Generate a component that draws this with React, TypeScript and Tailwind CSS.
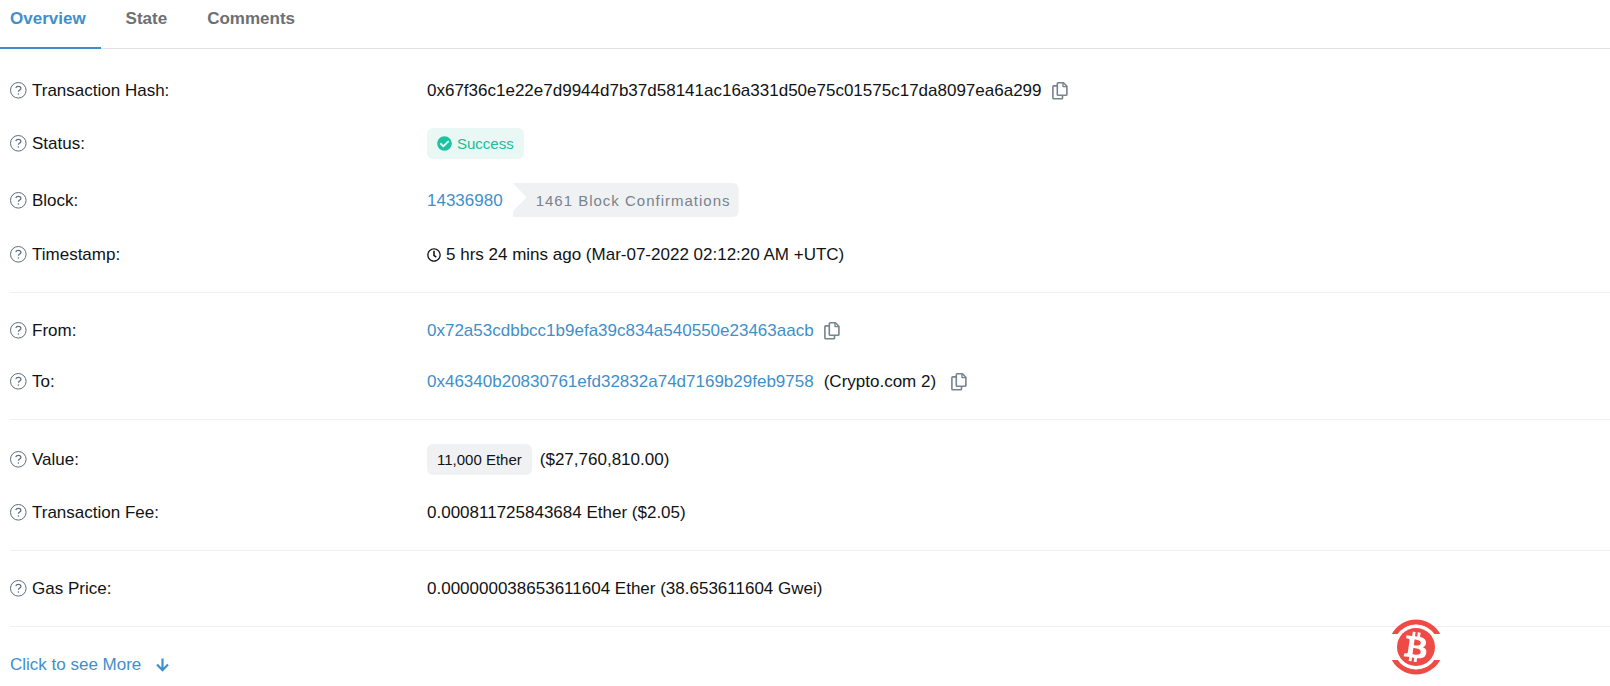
import { useState, type ReactNode } from "react";
import { FaBtc, FaCheckCircle, FaRegClock } from "react-icons/fa";

function HelpIcon() {
  return (
    <svg viewBox="0 0 17 17" className="h-[17px] w-[17px] shrink-0 text-[#5f6b7a]" fill="none" stroke="currentColor" aria-hidden="true">
      <circle cx="8.3" cy="8.3" r="7.8" strokeWidth="1" />
      <path d="M5.8 6.2C6.1 5 7.1 4.4 8.3 4.4c1.4 0 2.6.8 2.6 2 0 1.7-2.5 1.7-2.5 3.4" strokeWidth="1.2" />
      <circle cx="8.4" cy="12" r="0.8" fill="currentColor" stroke="none" />
    </svg>
  );
}

function CopyButton({ label }: { label: string }) {
  return (
    <button type="button" aria-label={label} className="flex shrink-0 cursor-pointer text-[#77838f]">
      <svg viewBox="0 0 16 18" className="h-[18px] w-4" fill="none" stroke="currentColor" strokeWidth="1.6" strokeLinejoin="round" aria-hidden="true">
        <path d="M6.2.8h5.2l3.5 3.4v8.2q0 .9-.9.9H6.2q-.9 0-.9-.9V1.7q0-.9.9-.9z" />
        <path d="M11 .9v3.7h3.8" strokeWidth="1.4" />
        <path d="M5.2 3.9H1.8q-.9 0-.9.9v11.1q0 .9.9.9h7.8q.9 0 .9-.9v-2.5" />
      </svg>
    </button>
  );
}

function Row({ label, children }: { label: string; children: ReactNode }) {
  return (
    <div className="grid grid-cols-[417px_1fr] items-center py-3">
      <dt className="flex items-center gap-[5px]">
        <HelpIcon />
        {label}
      </dt>
      <dd className="flex items-center">{children}</dd>
    </div>
  );
}

function Section({ children, className = "pt-3" }: { children: ReactNode; className?: string }) {
  return <dl className={`border-b border-[#eff0f2] pb-3 ${className}`}>{children}</dl>;
}

function BitcoinBadge() {
  return (
    <div className="absolute right-[166px] bottom-[11px] h-14 w-14">
      <svg viewBox="-28 -28 56 56" className="h-14 w-14" aria-label="Bitcoin" role="img">
        <circle r="24" fill="#fff" />
        <g fill="#ef4a45">
          <path d="M-24.2-13A27.5 27.5 0 0 1 24.2-13H17.2A20.5 20.5 0 0 0-17.2-13z" />
          <path d="M-24.2 13A27.5 27.5 0 0 0 24.2 13H17.2A20.5 20.5 0 0 1-17.2 13z" />
        </g>
        <circle r="22.5" fill="#fff" />
        <circle r="19" fill="#ef4a45" />
        <g transform="rotate(8)" color="#fff">
          <FaBtc x={-15} y={-15} size={30} />
        </g>
      </svg>
    </div>
  );
}

const tabs = ["Overview", "State", "Comments"];

export default function App() {
  const [active, setActive] = useState("Overview");
  return (
    <main className="relative bg-white font-['Liberation_Sans',Arial,sans-serif] text-[17px] leading-[27px] text-[#111315]">
      <div role="tablist" className="flex gap-[10px] border-b border-[#dfe2e6]">
        {tabs.map((tab) => (
          <button
            key={tab}
            type="button"
            role="tab"
            aria-selected={tab === active}
            onClick={() => setActive(tab)}
            className={`-mb-px cursor-pointer border-b-2 px-[15px] pt-[5px] pb-[15px] font-bold first:pl-[10px] ${
              tab === active ? "border-[#3f8fca] text-[#3f8fca]" : "border-transparent text-[#6c6f73]"
            }`}
          >
            {tab}
          </button>
        ))}
      </div>

      <div className="pl-[10px]">
        <Section className="pt-4">
          <Row label="Transaction Hash:">
            <span className="mr-[10px]">0x67f36c1e22e7d9944d7b37d58141ac16a331d50e75c01575c17da8097ea6a299</span>
            <CopyButton label="Copy transaction hash" />
          </Row>
          <Row label="Status:">
            <span className="flex h-[31px] items-center gap-[5px] rounded-md bg-[#e9f8f4] px-[10px] text-[15px] text-[#22bc98]">
              <FaCheckCircle size={15} className="text-[#1fc1a3]" />
              Success
            </span>
          </Row>
          <Row label="Block:">
            <a href="#block" className="mr-[10px] text-[#3f8fca]">14336980</a>
            <span className="flex h-[34px] items-center rounded-r-md bg-[#f0f1f3] pr-2 pl-[23px] text-[15px] tracking-[1px] text-[#77838f] [clip-path:polygon(0_0,100%_0,100%_100%,0_100%,0_84%,14px_42%)]">
              1461 Block Confirmations
            </span>
          </Row>
          <Row label="Timestamp:">
            <FaRegClock size={14} className="mr-[5px]" />
            5 hrs 24 mins ago (Mar-07-2022 02:12:20 AM +UTC)
          </Row>
        </Section>

        <Section>
          <Row label="From:">
            <a href="#from" className="mr-[10px] text-[#3f8fca]">0x72a53cdbbcc1b9efa39c834a540550e23463aacb</a>
            <CopyButton label="Copy sender address" />
          </Row>
          <Row label="To:">
            <a href="#to" className="mr-[10px] text-[#3f8fca]">0x46340b20830761efd32832a74d7169b29feb9758</a>
            <span className="mr-[15px]">(Crypto.com 2)</span>
            <CopyButton label="Copy recipient address" />
          </Row>
        </Section>

        <Section>
          <Row label="Value:">
            <span className="mr-2 flex h-[31px] items-center rounded-md bg-[#f0f1f3] px-[10px] text-[15px]">11,000 Ether</span>
            ($27,760,810.00)
          </Row>
          <Row label="Transaction Fee:">0.000811725843684 Ether ($2.05)</Row>
        </Section>

        <Section>
          <Row label="Gas Price:">0.000000038653611604 Ether (38.653611604 Gwei)</Row>
        </Section>

        <a href="#more" className="flex w-fit items-center gap-[15px] pt-6 pb-2 text-[#3f8fca]">
          Click to see More
          <svg viewBox="0 0 13 14" className="h-[14px] w-[13px]" fill="none" stroke="currentColor" strokeWidth="2.2" aria-hidden="true">
            <path d="M6.5.5v12M1 6.6l5.5 5.6L12 6.6" />
          </svg>
        </a>
      </div>
      <BitcoinBadge />
    </main>
  );
}
